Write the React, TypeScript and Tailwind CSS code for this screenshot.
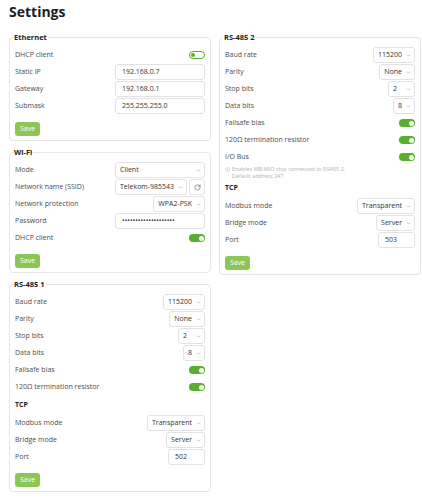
import { ChevronDown, Info, RotateCw } from 'lucide-react'
import type { ReactNode } from 'react'

function Toggle({ on = true }: { on?: boolean }) {
  if (!on) {
    return (
      <span className="flex h-[8px] w-[16px] items-center rounded-full border border-[#5aae2e] bg-white px-[1px]">
        <span className="h-[4px] w-[4px] rounded-full bg-[#5aae2e]" />
      </span>
    )
  }
  return (
    <span className="flex h-[8px] w-[16px] items-center justify-end rounded-full bg-[#5aae2e] px-[1.5px]">
      <span className="h-[5px] w-[5px] rounded-full bg-white" />
    </span>
  )
}

function Select({ value, className = '' }: { value: string; className?: string }) {
  return (
    <div className={`flex h-[16px] min-w-0 items-center justify-between rounded-[3px] border border-[#e2e2e2] bg-white pl-[4px] pr-[3px] text-[#333] ${className}`}>
      <span className="overflow-hidden whitespace-nowrap">{value}</span>
      <ChevronDown className="ml-[4px] h-[5px] w-[5px] shrink-0 text-[#8a8a8a]" strokeWidth={2.4} />
    </div>
  )
}

function TextInput({ value, className = 'w-[90px]' }: { value: string; className?: string }) {
  return (
    <div className={`flex h-[16px] items-center rounded-[3px] border border-[#e2e2e2] bg-white pl-[6px] text-[#333] ${className}`}>
      {value}
    </div>
  )
}

function Row({ label, children }: { label: string; children: ReactNode }) {
  return (
    <div className="flex h-[16px] items-center justify-between gap-2">
      <span className="whitespace-nowrap text-[#4d4d4d]">{label}</span>
      {children}
    </div>
  )
}

function Section({ title, children }: { title: string; children: ReactNode }) {
  return (
    <fieldset className="rounded-[4px] border border-[#e6e6e6] px-[5px] pt-[5px] pb-[4px]">
      <legend className="-ml-[2px] px-[1px] text-[7.5px] leading-[10px] font-bold text-[#222]">{title}</legend>
      <div className="flex flex-col gap-[1px]">{children}</div>
      <button className="mt-[8px] flex h-[14px] w-[25px] items-center justify-center rounded-[3px] bg-[#8cc654] text-[7px] text-white">
        Save
      </button>
    </fieldset>
  )
}

function Heading({ children }: { children: ReactNode }) {
  return <div className="flex h-[18px] items-center font-bold text-[#222]">{children}</div>
}

function SerialPort({ name, port, ioBus = false }: { name: string; port: string; ioBus?: boolean }) {
  return (
    <Section title={name}>
      <Row label="Baud rate">
        <Select value="115200" />
      </Row>
      <Row label="Parity">
        <Select value="None" />
      </Row>
      <Row label="Stop bits">
        <Select value="2" className="w-[27px]" />
      </Row>
      <Row label="Data bits">
        <Select value="8" />
      </Row>
      <Row label="Failsafe bias">
        <Toggle />
      </Row>
      <Row label="120Ω termination resistor">
        <Toggle />
      </Row>
      {ioBus && (
        <>
          <Row label="I/O Bus">
            <Toggle />
          </Row>
          {/* hint under the I/O bus switch */}
          <div className="-mb-[1px] flex h-[13px] gap-[2px] text-[5.5px] text-[#b3b3b3]">
            <Info className="mt-[0.5px] h-[5px] w-[5px] shrink-0" strokeWidth={2} />
            <div className="flex flex-col">
              <span className="h-[6.5px] leading-[6.5px]">Enables WB-MIO chip connected to RS485-2.</span>
              <span className="h-[6.5px] leading-[6.5px]">Default address 247</span>
            </div>
          </div>
        </>
      )}
      <Heading>TCP</Heading>
      <Row label="Modbus mode">
        <Select value="Transparent" />
      </Row>
      <Row label="Bridge mode">
        <Select value="Server" />
      </Row>
      <Row label="Port">
        <TextInput value={port} className="w-[37px]" />
      </Row>
    </Section>
  )
}

export default function App() {
  return (
    <div className="h-[500px] w-[422px] bg-white pt-[3px] pl-[9px] font-['Open_Sans',sans-serif] text-[7px] text-[#333]">
      <h1 className="h-[18px] text-[14px] leading-[18px] font-bold text-[#1d1d28]">Settings</h1>

      <div className="mt-[11px] flex items-start gap-[8px]">
        <div className="flex w-[202px] flex-col gap-[6px]">
          <Section title="Ethernet">
            <Row label="DHCP client">
              <Toggle on={false} />
            </Row>
            <Row label="Static IP">
              <TextInput value="192.168.0.7" />
            </Row>
            <Row label="Gateway">
              <TextInput value="192.168.0.1" />
            </Row>
            <Row label="Submask">
              <TextInput value="255.255.255.0" />
            </Row>
          </Section>

          <Section title="Wi-Fi">
            <Row label="Mode">
              <Select value="Client" className="w-[90px]" />
            </Row>
            <Row label="Network name (SSID)">
              <div className="flex w-[90px] gap-[2px]">
                <Select value="Telekom-985543" className="flex-1" />
                <div className="flex h-[16px] w-[16px] shrink-0 items-center justify-center rounded-[3px] border border-[#e2e2e2] text-[#666]">
                  <RotateCw className="h-[7px] w-[7px]" strokeWidth={2.2} />
                </div>
              </div>
            </Row>
            <Row label="Network protection">
              <Select value="WPA2-PSK" />
            </Row>
            <Row label="Password">
              <TextInput value="••••••••••••••••••••" />
            </Row>
            <Row label="DHCP client">
              <Toggle />
            </Row>
          </Section>

          <SerialPort name="RS-485 1" port="502" />
        </div>

        <div className="w-[202px]">
          <SerialPort name="RS-485 2" port="503" ioBus />
        </div>
      </div>
    </div>
  )
}
